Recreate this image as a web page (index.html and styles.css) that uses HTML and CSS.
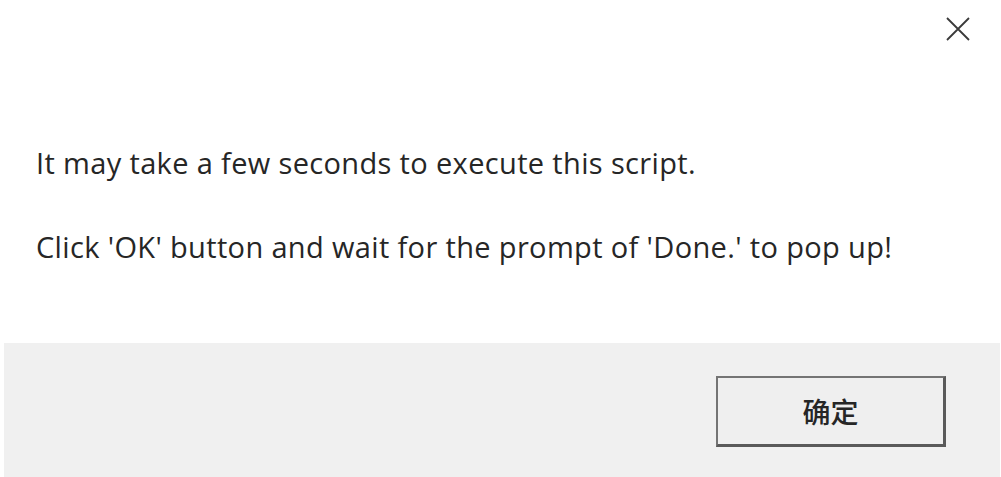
FILE: index.html
```html
<!DOCTYPE html>
<html>
<head>
<meta charset="utf-8">
<link rel="stylesheet" href="styles.css">
</head>
<body>
<div class="dialog">
  <div class="titlebar">
    <svg class="close" width="24" height="24" viewBox="0 0 24 24"><path d="M1 1 L23 23 M23 1 L1 23" stroke="#3a3a3a" stroke-width="1.8" fill="none"/></svg>
  </div>
  <div class="message">
    <p class="line first">It may take a few seconds to execute this script.</p>
    <p class="line">Click 'OK' button and wait for the prompt of 'Done.' to pop up!</p>
  </div>
  <div class="footer">
    <button class="ok">确定</button>
  </div>
</div>
</body>
</html>
```
FILE: styles.css
```css
html, body {
  margin: 0;
  padding: 0;
  background: #ffffff;
}
.dialog {
  width: 1001px;
  height: 477px;
  display: flex;
  flex-direction: column;
  font-family: "Open Sans", "Noto Sans CJK SC", sans-serif;
  color: #262626;
}
.titlebar {
  height: 58px;
  box-sizing: border-box;
  padding: 17px 31px 0 0;
  display: flex;
  justify-content: flex-end;
  align-items: flex-start;
}
.message {
  flex: 1;
  padding: 86px 0 0 36px;
}
.line {
  margin: 0 0 46px 0;
  font-size: 29px;
  line-height: 38px;
  letter-spacing: 0.35px;
  white-space: nowrap;
}
.footer {
  height: 134px;
  margin: 0 1px 0 4px;
  background: #f0f0f0;
  box-sizing: border-box;
  padding: 33px 54px 0 0;
  display: flex;
  justify-content: flex-end;
  align-items: flex-start;
}
.ok {
  width: 230px;
  height: 71px;
  box-sizing: border-box;
  background: #efefef;
  border: 2px solid #747474;
  border-right-width: 3px;
  border-bottom-width: 3px;
  border-right-color: #5a5a5a;
  border-bottom-color: #5a5a5a;
  font-family: "Noto Sans CJK SC", sans-serif;
  font-size: 28px;
  font-weight: 500;
  color: #262626;
  padding: 0;
}
```
